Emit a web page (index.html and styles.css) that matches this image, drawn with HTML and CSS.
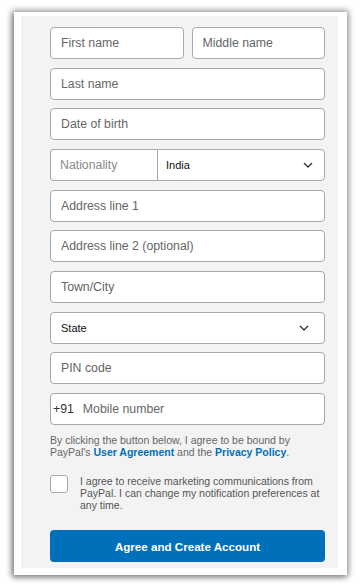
FILE: index.html
```html
<!DOCTYPE html>
<html>
<head>
<meta charset="utf-8">
<link rel="stylesheet" href="styles.css">
</head>
<body>
<div class="frame">
  <div class="panel">
    <div class="row two">
      <div class="field"><span class="ph">First name</span></div>
      <div class="field"><span class="ph">Middle name</span></div>
    </div>
    <div class="row"><div class="field"><span class="ph">Last name</span></div></div>
    <div class="row"><div class="field"><span class="ph">Date of birth</span></div></div>
    <div class="row nat">
      <div class="nat-label"><span class="ph light">Nationality</span></div>
      <div class="nat-select"><span class="val">India</span>
        <svg class="chev" width="10" height="6" viewBox="0 0 10 6"><path d="M1 1l4 4 4-4" fill="none" stroke="#333" stroke-width="1.3"/></svg>
      </div>
    </div>
    <div class="row"><div class="field"><span class="ph">Address line 1</span></div></div>
    <div class="row"><div class="field"><span class="ph">Address line 2 (optional)</span></div></div>
    <div class="row"><div class="field"><span class="ph">Town/City</span></div></div>
    <div class="row"><div class="field select"><span class="val">State</span>
      <svg class="chev" width="10" height="6" viewBox="0 0 10 6"><path d="M1 1l4 4 4-4" fill="none" stroke="#333" stroke-width="1.3"/></svg>
    </div></div>
    <div class="row"><div class="field"><span class="ph">PIN code</span></div></div>
    <div class="row"><div class="field phone"><span class="code">+91</span><span class="ph">Mobile number</span></div></div>
    <p class="legal">By clicking the button below, I agree to be bound by<br>PayPal's <a class="link">User Agreement</a> and the <a class="link">Privacy Policy</a>.</p>
    <div class="consent">
      <span class="box"></span>
      <p class="consent-text">I agree to receive marketing communications from PayPal. I can change my notification preferences at any time.</p>
    </div>
    <button class="cta">Agree and Create Account</button>
  </div>
</div>
</body>
</html>
```
FILE: styles.css
```css
html, body { margin: 0; padding: 0; background: #fff; }
body { font-family: "Liberation Sans", Arial, sans-serif; width: 360px; height: 587px; overflow: hidden; }
.frame {
  margin: 12px 0 0 14px;
  width: 333px;
  height: 563px;
  box-sizing: border-box;
  padding: 4px 9px 7px 7px;
  background: #fff;
  box-shadow: 0 0 6px 2px rgba(0,0,0,0.35), -2px 2px 6px rgba(0,0,0,0.3);
}
.panel {
  background: #f3f3f3;
  height: 100%;
  box-sizing: border-box;
  padding: 11px 0 0 29px;
}
.row { width: 275px; height: 32px; display: flex; margin-bottom: 8.67px; }
.row.two { gap: 8px; }
.field {
  flex: 1; box-sizing: border-box; height: 32px;
  border: 1px solid #a9a9a9; border-radius: 4px; background: #fff;
  display: flex; align-items: center; padding-left: 10px;
}
.ph { font-size: 12.3px; color: #666; }
.ph.light { color: #8a8a8a; }
.val { font-size: 11px; color: #111; }
.nat-label {
  width: 107px; box-sizing: border-box; height: 32px;
  border: 1px solid #a9a9a9; border-right: none; border-radius: 4px 0 0 4px;
  display: flex; align-items: center; padding-left: 9px; background: #fff;
}
.nat-select {
  flex: 1; box-sizing: border-box; height: 32px;
  border: 1px solid #a9a9a9; border-radius: 0 4px 4px 0; background: #fff;
  display: flex; align-items: center; padding: 0 11px 0 8px; justify-content: space-between;
}
.field.select { justify-content: space-between; padding-right: 15px; }
.chev { display: block; }
.field.phone { padding-left: 2px; }
.code { font-size: 12.3px; color: #333; margin-right: 9px; }
.legal {
  margin: 0; padding-top: 0.5px; width: 280px; font-size: 10.5px; line-height: 12px; color: #666;
  white-space: nowrap;
}
.link { color: #0070ba; font-weight: bold; }
.consent { display: flex; margin-top: 17px; width: 280px; }
.box {
  flex: none; width: 18px; height: 18px; box-sizing: border-box;
  border: 1px solid #a9a9a9; border-radius: 3px; background: #fff; margin-right: 12px;
}
.consent-text { margin: 0; padding-top: 0; font-size: 10.5px; line-height: 12px; color: #555; }
.cta {
  display: block; margin-top: 19px; width: 275px; height: 32px;
  background: #0070ba; color: #fff; border: none; border-radius: 4px;
  font-family: "Liberation Sans", Arial, sans-serif; font-weight: bold; font-size: 11.6px;
}
```
